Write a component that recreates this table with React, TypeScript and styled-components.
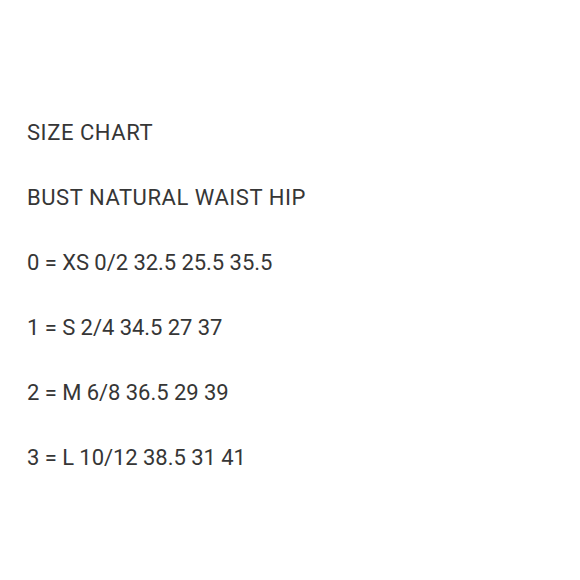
import styled, { createGlobalStyle } from 'styled-components';

const GlobalStyle = createGlobalStyle`
    html, body {
        margin: 0;
        padding: 0;
        background: #ffffff;
    }
`;

const rows = [
    { text: 'SIZE CHART', label: true },
    { text: 'BUST NATURAL WAIST HIP', label: true },
    { text: '0 = XS 0/2 32.5 25.5 35.5', label: false },
    { text: '1 = S 2/4 34.5 27 37', label: false },
    { text: '2 = M 6/8 36.5 29 39', label: false },
    { text: '3 = L 10/12 38.5 31 41', label: false },
];

export default function App() {
    return (
        <>
            <GlobalStyle />
            <Page>
                <Chart>
                    {rows.map((row) => (
                        <Line key={row.text} $label={row.label}>{row.text}</Line>
                    ))}
                </Chart>
            </Page>
        </>
    );
}

const Page = styled.div`
    width: 580px;
    height: 580px;
    background: #ffffff;
    padding: 100px 0 0 27px;
    box-sizing: border-box;
`;

const Chart = styled.div`
    display: flex;
    flex-direction: column;
`;

const Line = styled.div<{ $label: boolean }>`
    font-family: Roboto, "Liberation Sans", sans-serif;
    font-size: 22px;
    line-height: 65px;
    color: #363636;
    letter-spacing: ${(p) => (p.$label ? '0.55px' : '-0.05px')};
    white-space: nowrap;
`;
